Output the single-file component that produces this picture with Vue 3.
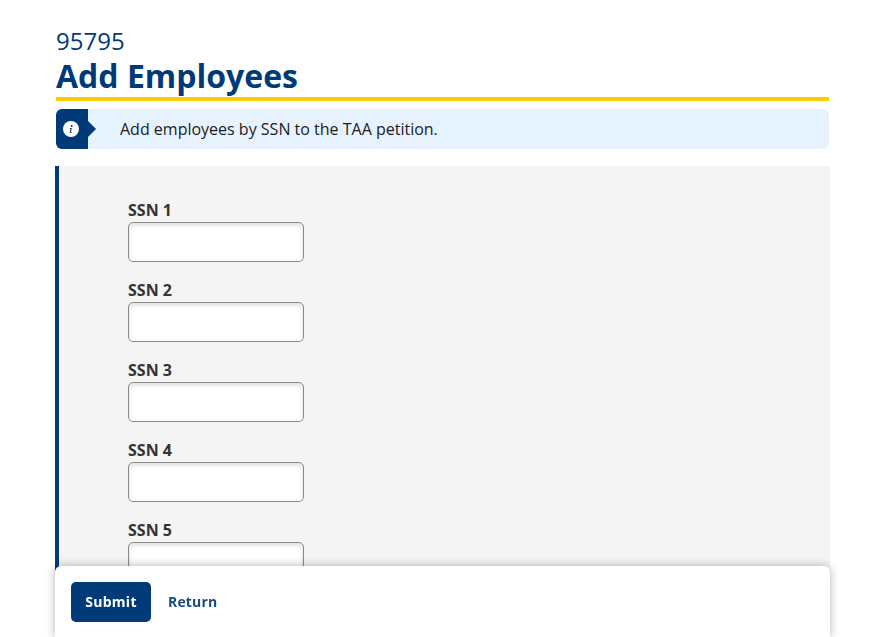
<template>
  <div class="page">
    <header class="page-head">
      <div class="case-no">95795</div>
      <h1>Add Employees</h1>
    </header>

    <div class="alert">
      <div class="alert-icon">
        <svg width="16" height="16" viewBox="0 0 16 16" aria-hidden="true">
          <circle cx="8" cy="8" r="8" fill="#fff" />
          <circle cx="8.7" cy="5" r="1" fill="#003a78" />
          <path d="M6.7 7.1h2.1L8 10.9h.8v.8H6.4l.1-.5.4-.1.7-3.3h-.7z" fill="#003a78" />
        </svg>
      </div>
      <p>Add employees by SSN to the TAA petition.</p>
    </div>

    <form class="panel" @submit.prevent>
      <div v-for="n in 5" :key="n" class="field">
        <label :for="'ssn-' + n">SSN {{ n }}</label>
        <input :id="'ssn-' + n" type="text" />
      </div>
    </form>

    <div class="actions">
      <button type="button" class="btn-submit">Submit</button>
      <a href="#" class="link-return">Return</a>
    </div>
  </div>
</template>

<script setup>
</script>

<style>
html,
body {
  margin: 0;
  height: 100%;
  overflow: hidden;
  background: #fff;
}
</style>

<style scoped>
.page {
  box-sizing: border-box;
  height: 100vh;
  overflow: hidden;
  padding: 27px 42px 0 56px;
  font-family: "Open Sans", "Liberation Sans", sans-serif;
  color: #212121;
}

.page-head {
  border-bottom: 4px solid #ffcc00;
  padding-bottom: 1px;
  color: #003a78;
}

.case-no {
  font-size: 24px;
  line-height: 28px;
}

h1 {
  margin: 0;
  font-size: 32px;
  line-height: 41px;
  font-weight: 700;
}

.alert {
  display: flex;
  align-items: center;
  height: 40px;
  margin-top: 8px;
  background: #e7f2ff;
  border-radius: 6px;
}

.alert-icon {
  position: relative;
  display: flex;
  align-items: center;
  justify-content: center;
  flex: none;
  box-sizing: border-box;
  width: 32px;
  height: 40px;
  padding-right: 2px;
  background: #003a78;
  border-radius: 6px 0 0 6px;
}

.alert-icon::after {
  content: "";
  position: absolute;
  left: 32px;
  top: 12px;
  border-left: 8px solid #003a78;
  border-top: 8px solid transparent;
  border-bottom: 8px solid transparent;
}

.alert p {
  margin: 0 0 0 32px;
  font-size: 16px;
  line-height: 22px;
}

.panel {
  margin: 17px -1px 0 -1px;
  padding: 32px 0 0 69px;
  min-height: 500px;
  background: #f4f4f4;
  border-left: 4px solid #003a78;
}

.field {
  display: flex;
  flex-direction: column;
  align-items: flex-start;
  height: 80px;
}

.field label {
  font-size: 16px;
  line-height: 24px;
  font-weight: 700;
  color: #333;
}

.field input {
  box-sizing: border-box;
  width: 176px;
  height: 40px;
  padding: 0 8px;
  background: #fff;
  border: 1px solid #8c8c8c;
  border-radius: 5px;
  box-shadow: inset 0 2px 4px rgba(0, 0, 0, 0.15);
  outline: none;
}

.actions {
  position: fixed;
  left: 55px;
  bottom: 0;
  display: flex;
  align-items: center;
  box-sizing: border-box;
  width: 775px;
  height: 71px;
  padding: 0 16px;
  gap: 17px;
  background: #fff;
  border-radius: 6px 6px 0 0;
  box-shadow: 0 0 10px rgba(0, 0, 0, 0.3);
}

.btn-submit {
  width: 80px;
  height: 40px;
  padding: 0;
  font: 700 14px "Open Sans", "Liberation Sans", sans-serif;
  letter-spacing: 0.3px;
  color: #fff;
  background: #003a78;
  border: none;
  border-radius: 5px;
}

.link-return {
  font-size: 14px;
  font-weight: 700;
  letter-spacing: 0.15px;
  color: #164a82;
  text-decoration: none;
}
</style>
